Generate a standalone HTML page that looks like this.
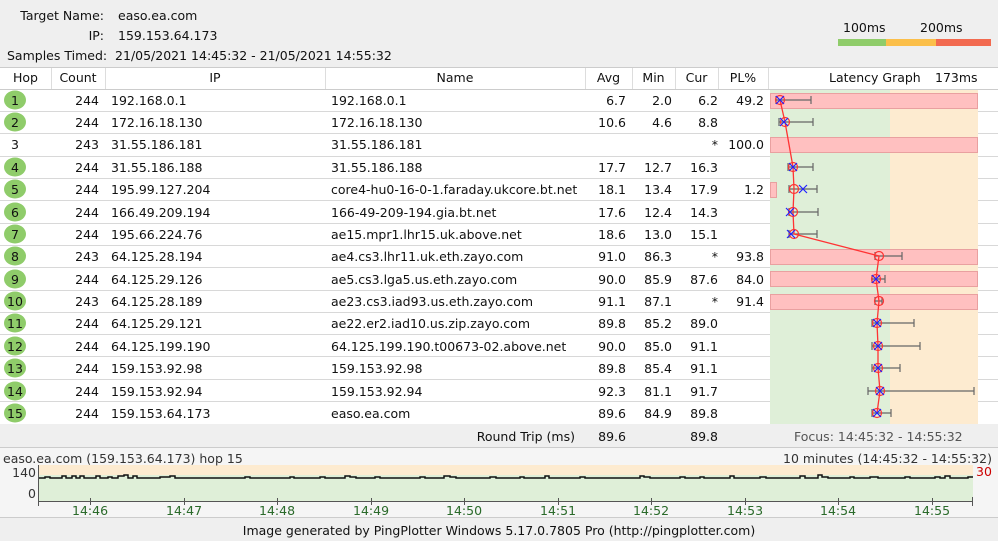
<!DOCTYPE html>
<html><head><meta charset="utf-8"><style>
*{margin:0;padding:0;box-sizing:border-box}
body{width:998px;height:541px;overflow:hidden;background:#fff;font-family:"DejaVu Sans","Liberation Sans",sans-serif;font-size:12.5px;color:#111;position:relative}
.a{position:absolute;white-space:nowrap}
.r{text-align:right}
.c{text-align:center}
</style></head><body>
<div class="a" style="left:0;top:0;width:998px;height:68px;background:#efefef"></div>
<div class="a r" style="left:0;top:8px;width:104px">Target Name:</div><div class="a" style="left:118px;top:8px">easo.ea.com</div>
<div class="a r" style="left:0;top:28px;width:104px">IP:</div><div class="a" style="left:118px;top:28px">159.153.64.173</div>
<div class="a" style="left:7px;top:48px">Samples Timed:&nbsp; 21/05/2021 14:45:32 - 21/05/2021 14:55:32</div>
<div class="a" style="left:843px;top:20px">100ms</div><div class="a" style="left:920px;top:20px">200ms</div>
<div class="a" style="left:838px;top:39px;width:48px;height:7px;background:#8fcc6a"></div>
<div class="a" style="left:886px;top:39px;width:50px;height:7px;background:#fbbf4a"></div>
<div class="a" style="left:936px;top:39px;width:55px;height:7px;background:#f26a50"></div>

<svg class="a" style="left:0;top:0" width="998" height="541">
<line x1="0" y1="67.5" x2="998" y2="67.5" stroke="#ccc"/>
<line x1="0" y1="89.5" x2="998" y2="89.5" stroke="#ccc"/>
<g stroke="#ddd"><line x1="51.5" y1="68" x2="51.5" y2="89"/><line x1="105.5" y1="68" x2="105.5" y2="89"/><line x1="325.5" y1="68" x2="325.5" y2="89"/><line x1="585.5" y1="68" x2="585.5" y2="89"/><line x1="632.5" y1="68" x2="632.5" y2="89"/><line x1="675.5" y1="68" x2="675.5" y2="89"/><line x1="718.5" y1="68" x2="718.5" y2="89"/><line x1="768.5" y1="68" x2="768.5" y2="89"/></g>
<g stroke="#d8d8d8">
<line x1="0" y1="111.5" x2="770" y2="111.5"/><line x1="0" y1="133.5" x2="770" y2="133.5"/><line x1="0" y1="156.5" x2="770" y2="156.5"/><line x1="0" y1="178.5" x2="770" y2="178.5"/><line x1="0" y1="200.5" x2="770" y2="200.5"/><line x1="0" y1="223.5" x2="770" y2="223.5"/><line x1="0" y1="245.5" x2="770" y2="245.5"/><line x1="0" y1="267.5" x2="770" y2="267.5"/><line x1="0" y1="290.5" x2="770" y2="290.5"/><line x1="0" y1="312.5" x2="770" y2="312.5"/><line x1="0" y1="334.5" x2="770" y2="334.5"/><line x1="0" y1="356.5" x2="770" y2="356.5"/><line x1="0" y1="379.5" x2="770" y2="379.5"/><line x1="0" y1="401.5" x2="770" y2="401.5"/>
<line x1="978" y1="111.5" x2="998" y2="111.5"/><line x1="978" y1="133.5" x2="998" y2="133.5"/><line x1="978" y1="156.5" x2="998" y2="156.5"/><line x1="978" y1="178.5" x2="998" y2="178.5"/><line x1="978" y1="200.5" x2="998" y2="200.5"/><line x1="978" y1="223.5" x2="998" y2="223.5"/><line x1="978" y1="245.5" x2="998" y2="245.5"/><line x1="978" y1="267.5" x2="998" y2="267.5"/><line x1="978" y1="290.5" x2="998" y2="290.5"/><line x1="978" y1="312.5" x2="998" y2="312.5"/><line x1="978" y1="334.5" x2="998" y2="334.5"/><line x1="978" y1="356.5" x2="998" y2="356.5"/><line x1="978" y1="379.5" x2="998" y2="379.5"/><line x1="978" y1="401.5" x2="998" y2="401.5"/>
</g>
<rect x="770" y="90" width="120" height="334" fill="#dfefd8"/>
<rect x="890" y="90" width="88" height="334" fill="#fdebd0"/>
<g fill="#ffc0c0" stroke="#e9a0a0">
<rect x="770.5" y="93.5" width="207" height="15"/><rect x="770.5" y="137.5" width="207" height="15"/><rect x="770.5" y="182.5" width="6" height="15"/><rect x="770.5" y="249.5" width="207" height="15"/><rect x="770.5" y="271.5" width="207" height="15"/><rect x="770.5" y="294.5" width="207" height="15"/>
</g>
<g stroke="#666" stroke-width="1.2">
<path d="M776 100H811M776 96V104M811 96V104"/>
<path d="M779 122H813M779 118V126M813 118V126"/>
<path d="M788 167H813M788 163V171M813 163V171"/>
<path d="M789 189H817M789 185V193M817 185V193"/>
<path d="M789 212H818M789 208V216M818 208V216"/>
<path d="M789 234H817M789 230V238M817 230V238"/>
<path d="M875 256H902M875 252V260M902 252V260"/>
<path d="M872 279H885M872 275V283M885 275V283"/>
<path d="M875 301H882M875 297V305M882 297V305"/>
<path d="M872 323H914M872 319V327M914 319V327"/>
<path d="M872 346H920M872 342V350M920 342V350"/>
<path d="M872 368H900M872 364V372M900 364V372"/>
<path d="M868 391H974M868 387V395M974 387V395"/>
<path d="M872 413H891M872 409V417M891 409V417"/>
</g>
<polyline fill="none" stroke="#f33" stroke-width="1.3" points="780,100 785,122 793,167 794,189 793,212 794,234 879,256 876,279 879,301 877,323 878,346 878,368 880,391 877,413"/>
<g fill="none" stroke="#f33" stroke-width="1.2">
<circle cx="780" cy="100" r="4.5"/><circle cx="785" cy="122" r="4.5"/><circle cx="793" cy="167" r="4.5"/><circle cx="794" cy="189" r="4.5"/><circle cx="793" cy="212" r="4.5"/><circle cx="794" cy="234" r="4.5"/><circle cx="879" cy="256" r="4.5"/><circle cx="876" cy="279" r="4.5"/><circle cx="879" cy="301" r="4.5"/><circle cx="877" cy="323" r="4.5"/><circle cx="878" cy="346" r="4.5"/><circle cx="878" cy="368" r="4.5"/><circle cx="880" cy="391" r="4.5"/><circle cx="877" cy="413" r="4.5"/>
</g>
<g stroke="#22f" stroke-width="1.2">
<path d="M776 96l8 8M784 96l-8 8"/><path d="M780 118l8 8M788 118l-8 8"/><path d="M789 163l8 8M797 163l-8 8"/><path d="M799 185l8 8M807 185l-8 8"/><path d="M786 208l8 8M794 208l-8 8"/><path d="M787 230l8 8M795 230l-8 8"/><path d="M872 275l8 8M880 275l-8 8"/><path d="M873 319l8 8M881 319l-8 8"/><path d="M874 342l8 8M882 342l-8 8"/><path d="M874 364l8 8M882 364l-8 8"/><path d="M876 387l8 8M884 387l-8 8"/><path d="M873 409l8 8M881 409l-8 8"/>
</g>
<g fill="#8fcc6a">
<ellipse cx="15" cy="100" rx="11" ry="9.5"/><ellipse cx="15" cy="122" rx="11" ry="9.5"/><ellipse cx="15" cy="167" rx="11" ry="9.5"/><ellipse cx="15" cy="189" rx="11" ry="9.5"/><ellipse cx="15" cy="212" rx="11" ry="9.5"/><ellipse cx="15" cy="234" rx="11" ry="9.5"/><ellipse cx="15" cy="256" rx="11" ry="9.5"/><ellipse cx="15" cy="279" rx="11" ry="9.5"/><ellipse cx="15" cy="301" rx="11" ry="9.5"/><ellipse cx="15" cy="323" rx="11" ry="9.5"/><ellipse cx="15" cy="346" rx="11" ry="9.5"/><ellipse cx="15" cy="368" rx="11" ry="9.5"/><ellipse cx="15" cy="391" rx="11" ry="9.5"/><ellipse cx="15" cy="413" rx="11" ry="9.5"/>
</g>
<rect x="0" y="424" width="998" height="24" fill="#efefef"/>
<line x1="0" y1="447.5" x2="998" y2="447.5" stroke="#ccc"/>
<rect x="0" y="448" width="998" height="70" fill="#f5f5f5"/>
<rect x="39" y="465" width="934" height="10" fill="#fdebd0"/>
<rect x="39" y="475" width="934" height="26" fill="#dfefd8"/>
<polyline fill="none" stroke="#111" stroke-width="1.5" points="39,478 45,478 45,477 50,477 50,478 62,478 62,476 66,476 66,478 72,478 72,476 76,476 76,478 80,478 80,476 84,476 84,478 96,478 96,476 100,476 100,478 108,478 108,477 112,477 112,478 118,478 118,476 124,476 124,475 128,475 128,478 133,478 133,476 137,476 137,478 160,478 160,477 170,477 170,476 175,476 175,478 245,478 245,477 250,477 250,478 290,478 290,477 294,477 294,478 320,478 320,477 325,477 325,478 345,478 345,476 350,476 350,477 356,477 356,478 375,478 375,477 380,477 380,478 420,478 420,477 425,477 425,478 444,478 444,476 450,476 450,477 456,477 456,478 490,478 490,477 496,477 496,478 520,478 520,477 524,477 524,478 545,478 545,476 549,476 549,478 580,478 580,477 585,477 585,478 640,478 640,476 644,476 644,477 650,477 650,478 680,478 680,477 685,477 685,478 700,478 700,477 704,477 704,478 730,478 730,476 734,476 734,478 760,478 760,477 766,477 766,478 800,478 800,476 805,476 805,478 818,478 818,475 822,475 822,477 828,477 828,478 850,478 850,477 854,477 854,478 870,478 870,477 878,477 878,478 905,478 905,477 910,477 910,478 935,478 935,477 940,477 940,478 945,478 945,476 950,476 950,478 968,478 968,477 973,477"/>
<path d="M38.5 465V506M38 501.5H973M972.5 497V506" stroke="#555" fill="none"/>
<g stroke="#555"><line x1="90.5" y1="498" x2="90.5" y2="505"/><line x1="184.5" y1="498" x2="184.5" y2="505"/><line x1="277.5" y1="498" x2="277.5" y2="505"/><line x1="371.5" y1="498" x2="371.5" y2="505"/><line x1="464.5" y1="498" x2="464.5" y2="505"/><line x1="558.5" y1="498" x2="558.5" y2="505"/><line x1="651.5" y1="498" x2="651.5" y2="505"/><line x1="745.5" y1="498" x2="745.5" y2="505"/><line x1="838.5" y1="498" x2="838.5" y2="505"/><line x1="932.5" y1="498" x2="932.5" y2="505"/></g>
<rect x="0" y="518" width="998" height="23" fill="#efefef"/>
<line x1="0" y1="517.5" x2="998" y2="517.5" stroke="#ccc"/>
</svg>

<div class="a c" style="left:0;top:70px;width:51px">Hop</div>
<div class="a c" style="left:51px;top:70px;width:54px">Count</div>
<div class="a c" style="left:105px;top:70px;width:220px">IP</div>
<div class="a c" style="left:325px;top:70px;width:260px">Name</div>
<div class="a c" style="left:585px;top:70px;width:47px">Avg</div>
<div class="a c" style="left:632px;top:70px;width:43px">Min</div>
<div class="a c" style="left:675px;top:70px;width:43px">Cur</div>
<div class="a c" style="left:718px;top:70px;width:50px">PL%</div>
<div class="a" style="left:829px;top:70px">Latency Graph</div>
<div class="a" style="left:935px;top:70px">173ms</div>

<div id="rows"></div>
<div class="a r" style="left:420px;top:429px;width:155px">Round Trip (ms)</div>
<div class="a r" style="left:585px;top:429px;width:41px">89.6</div>
<div class="a r" style="left:675px;top:429px;width:43px">89.8</div>
<div class="a" style="left:794px;top:429px;color:#555">Focus: 14:45:32 - 14:55:32</div>
<div class="a" style="left:3px;top:451px;color:#333">easo.ea.com (159.153.64.173) hop 15</div>
<div class="a" style="left:783px;top:451px;color:#333">10 minutes (14:45:32 - 14:55:32)</div>
<div class="a r" style="left:0;top:465px;width:36px;color:#333">140</div>
<div class="a r" style="left:0;top:486px;width:36px;color:#333">0</div>
<div class="a" style="left:976px;top:464px;color:#c00">30</div>
<div style="color:#2a6a2a">
<div class="a" style="left:72px;top:503px">14:46</div><div class="a" style="left:166px;top:503px">14:47</div><div class="a" style="left:259px;top:503px">14:48</div><div class="a" style="left:353px;top:503px">14:49</div><div class="a" style="left:446px;top:503px">14:50</div><div class="a" style="left:540px;top:503px">14:51</div><div class="a" style="left:633px;top:503px">14:52</div><div class="a" style="left:727px;top:503px">14:53</div><div class="a" style="left:820px;top:503px">14:54</div><div class="a" style="left:914px;top:503px">14:55</div>
</div>
<div class="a c" style="left:0;top:523px;width:998px">Image generated by PingPlotter Windows 5.17.0.7805 Pro (http://pingplotter.com)</div>

<div class="a c" style="left:4px;top:93px;width:22px">1</div><div class="a r" style="left:51px;top:93px;width:48px">244</div><div class="a" style="left:111px;top:93px">192.168.0.1</div><div class="a" style="left:331px;top:93px">192.168.0.1</div><div class="a r" style="left:585px;top:93px;width:41px">6.7</div><div class="a r" style="left:632px;top:93px;width:40px">2.0</div><div class="a r" style="left:675px;top:93px;width:43px">6.2</div><div class="a r" style="left:718px;top:93px;width:46px">49.2</div>
<div class="a c" style="left:4px;top:115px;width:22px">2</div><div class="a r" style="left:51px;top:115px;width:48px">244</div><div class="a" style="left:111px;top:115px">172.16.18.130</div><div class="a" style="left:331px;top:115px">172.16.18.130</div><div class="a r" style="left:585px;top:115px;width:41px">10.6</div><div class="a r" style="left:632px;top:115px;width:40px">4.6</div><div class="a r" style="left:675px;top:115px;width:43px">8.8</div>
<div class="a c" style="left:4px;top:137px;width:22px">3</div><div class="a r" style="left:51px;top:137px;width:48px">243</div><div class="a" style="left:111px;top:137px">31.55.186.181</div><div class="a" style="left:331px;top:137px">31.55.186.181</div><div class="a r" style="left:675px;top:137px;width:43px">*</div><div class="a r" style="left:718px;top:137px;width:46px">100.0</div>
<div class="a c" style="left:4px;top:160px;width:22px">4</div><div class="a r" style="left:51px;top:160px;width:48px">244</div><div class="a" style="left:111px;top:160px">31.55.186.188</div><div class="a" style="left:331px;top:160px">31.55.186.188</div><div class="a r" style="left:585px;top:160px;width:41px">17.7</div><div class="a r" style="left:632px;top:160px;width:40px">12.7</div><div class="a r" style="left:675px;top:160px;width:43px">16.3</div>
<div class="a c" style="left:4px;top:182px;width:22px">5</div><div class="a r" style="left:51px;top:182px;width:48px">244</div><div class="a" style="left:111px;top:182px">195.99.127.204</div><div class="a" style="left:331px;top:182px">core4-hu0-16-0-1.faraday.ukcore.bt.net</div><div class="a r" style="left:585px;top:182px;width:41px">18.1</div><div class="a r" style="left:632px;top:182px;width:40px">13.4</div><div class="a r" style="left:675px;top:182px;width:43px">17.9</div><div class="a r" style="left:718px;top:182px;width:46px">1.2</div>
<div class="a c" style="left:4px;top:205px;width:22px">6</div><div class="a r" style="left:51px;top:205px;width:48px">244</div><div class="a" style="left:111px;top:205px">166.49.209.194</div><div class="a" style="left:331px;top:205px">166-49-209-194.gia.bt.net</div><div class="a r" style="left:585px;top:205px;width:41px">17.6</div><div class="a r" style="left:632px;top:205px;width:40px">12.4</div><div class="a r" style="left:675px;top:205px;width:43px">14.3</div>
<div class="a c" style="left:4px;top:227px;width:22px">7</div><div class="a r" style="left:51px;top:227px;width:48px">244</div><div class="a" style="left:111px;top:227px">195.66.224.76</div><div class="a" style="left:331px;top:227px">ae15.mpr1.lhr15.uk.above.net</div><div class="a r" style="left:585px;top:227px;width:41px">18.6</div><div class="a r" style="left:632px;top:227px;width:40px">13.0</div><div class="a r" style="left:675px;top:227px;width:43px">15.1</div>
<div class="a c" style="left:4px;top:249px;width:22px">8</div><div class="a r" style="left:51px;top:249px;width:48px">243</div><div class="a" style="left:111px;top:249px">64.125.28.194</div><div class="a" style="left:331px;top:249px">ae4.cs3.lhr11.uk.eth.zayo.com</div><div class="a r" style="left:585px;top:249px;width:41px">91.0</div><div class="a r" style="left:632px;top:249px;width:40px">86.3</div><div class="a r" style="left:675px;top:249px;width:43px">*</div><div class="a r" style="left:718px;top:249px;width:46px">93.8</div>
<div class="a c" style="left:4px;top:272px;width:22px">9</div><div class="a r" style="left:51px;top:272px;width:48px">244</div><div class="a" style="left:111px;top:272px">64.125.29.126</div><div class="a" style="left:331px;top:272px">ae5.cs3.lga5.us.eth.zayo.com</div><div class="a r" style="left:585px;top:272px;width:41px">90.0</div><div class="a r" style="left:632px;top:272px;width:40px">85.9</div><div class="a r" style="left:675px;top:272px;width:43px">87.6</div><div class="a r" style="left:718px;top:272px;width:46px">84.0</div>
<div class="a c" style="left:4px;top:294px;width:22px">10</div><div class="a r" style="left:51px;top:294px;width:48px">243</div><div class="a" style="left:111px;top:294px">64.125.28.189</div><div class="a" style="left:331px;top:294px">ae23.cs3.iad93.us.eth.zayo.com</div><div class="a r" style="left:585px;top:294px;width:41px">91.1</div><div class="a r" style="left:632px;top:294px;width:40px">87.1</div><div class="a r" style="left:675px;top:294px;width:43px">*</div><div class="a r" style="left:718px;top:294px;width:46px">91.4</div>
<div class="a c" style="left:4px;top:316px;width:22px">11</div><div class="a r" style="left:51px;top:316px;width:48px">244</div><div class="a" style="left:111px;top:316px">64.125.29.121</div><div class="a" style="left:331px;top:316px">ae22.er2.iad10.us.zip.zayo.com</div><div class="a r" style="left:585px;top:316px;width:41px">89.8</div><div class="a r" style="left:632px;top:316px;width:40px">85.2</div><div class="a r" style="left:675px;top:316px;width:43px">89.0</div>
<div class="a c" style="left:4px;top:339px;width:22px">12</div><div class="a r" style="left:51px;top:339px;width:48px">244</div><div class="a" style="left:111px;top:339px">64.125.199.190</div><div class="a" style="left:331px;top:339px">64.125.199.190.t00673-02.above.net</div><div class="a r" style="left:585px;top:339px;width:41px">90.0</div><div class="a r" style="left:632px;top:339px;width:40px">85.0</div><div class="a r" style="left:675px;top:339px;width:43px">91.1</div>
<div class="a c" style="left:4px;top:361px;width:22px">13</div><div class="a r" style="left:51px;top:361px;width:48px">244</div><div class="a" style="left:111px;top:361px">159.153.92.98</div><div class="a" style="left:331px;top:361px">159.153.92.98</div><div class="a r" style="left:585px;top:361px;width:41px">89.8</div><div class="a r" style="left:632px;top:361px;width:40px">85.4</div><div class="a r" style="left:675px;top:361px;width:43px">91.1</div>
<div class="a c" style="left:4px;top:384px;width:22px">14</div><div class="a r" style="left:51px;top:384px;width:48px">244</div><div class="a" style="left:111px;top:384px">159.153.92.94</div><div class="a" style="left:331px;top:384px">159.153.92.94</div><div class="a r" style="left:585px;top:384px;width:41px">92.3</div><div class="a r" style="left:632px;top:384px;width:40px">81.1</div><div class="a r" style="left:675px;top:384px;width:43px">91.7</div>
<div class="a c" style="left:4px;top:406px;width:22px">15</div><div class="a r" style="left:51px;top:406px;width:48px">244</div><div class="a" style="left:111px;top:406px">159.153.64.173</div><div class="a" style="left:331px;top:406px">easo.ea.com</div><div class="a r" style="left:585px;top:406px;width:41px">89.6</div><div class="a r" style="left:632px;top:406px;width:40px">84.9</div><div class="a r" style="left:675px;top:406px;width:43px">89.8</div>
</body></html>
